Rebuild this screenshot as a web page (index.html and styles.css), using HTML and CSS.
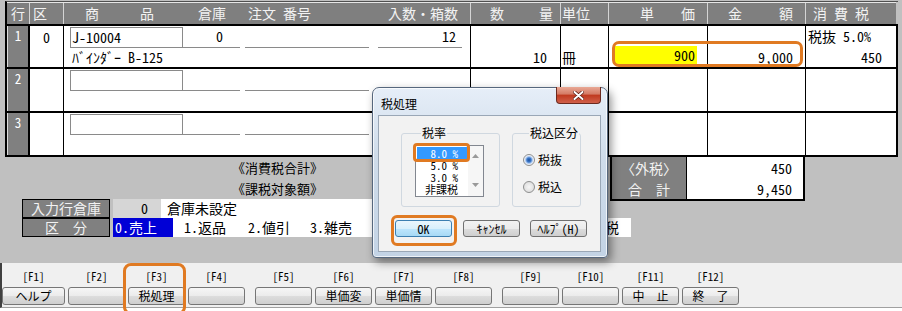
FILE: index.html
```html
<!DOCTYPE html>
<html lang="ja">
<head>
<meta charset="utf-8">
<title>売上入力</title>
<link rel="stylesheet" href="styles.css">
</head>
<body>
<div class="app">
  <div class="main">
    <div class="sheet">
      <div class="hdr">
        <div class="h h-gyo">行</div>
        <div class="h h-ku">区</div>
        <div class="h h-item"><span class="hi-a">商</span><span class="hi-b">品</span><span class="hi-wh">倉庫</span><span class="hi-ord">注文 番号</span><span class="hi-qty">入数・箱数</span></div>
        <div class="h h-split h-num"><span>数</span><span>量</span></div>
        <div class="h h-unit">単位</div>
        <div class="h h-split h-price"><span>単</span><span>価</span></div>
        <div class="h h-split h-amt"><span>金</span><span>額</span></div>
        <div class="h h-tax">消 費 税</div>
      </div>
      <div class="rows">
        <div class="c rn">1</div>
        <div class="c ku">0</div>
        <div class="c item">
          <div class="l1"><div class="code">J-10004</div><div class="wh">0</div><div class="ord"></div><div class="qty">12</div></div>
          <div class="l2 name">ﾊﾞｲﾝﾀﾞｰ B-125</div>
        </div>
        <div class="c num"><div class="l2">10</div></div>
        <div class="c unit"><div class="l2">冊</div></div>
        <div class="c price"><div class="yel">900</div></div>
        <div class="c amt"><div class="l2">9,000</div></div>
        <div class="c tax"><div class="l1t">税抜 5.0%</div><div class="l2">450</div></div>

        <div class="c rn">2</div>
        <div class="c ku"></div>
        <div class="c item">
          <div class="l1"><div class="code"></div><div class="wh"></div><div class="ord"></div><div class="qty"></div></div>
        </div>
        <div class="c num"></div>
        <div class="c unit"></div>
        <div class="c price"></div>
        <div class="c amt"></div>
        <div class="c tax"></div>

        <div class="c rn">3</div>
        <div class="c ku"></div>
        <div class="c item">
          <div class="l1"><div class="code"></div><div class="wh"></div><div class="ord"></div><div class="qty"></div></div>
        </div>
        <div class="c num"></div>
        <div class="c unit"></div>
        <div class="c price"></div>
        <div class="c amt"></div>
        <div class="c tax"></div>
      </div>
    </div>

    <div class="lower">
      <div class="sums">
        <div class="sum-labels"><div>《消費税合計》</div><div>《課税対象額》</div></div>
        <div class="sum-head"><div>〈外税〉</div><div>合　計</div></div>
        <div class="sum-val"><div>450</div><div>9,450</div></div>
      </div>
      <div class="entry">
        <div class="erow">
          <div class="elabel">入力行倉庫</div>
          <div class="ecode">0</div>
          <div class="etext">倉庫未設定</div>
        </div>
        <div class="erow">
          <div class="elabel">区　分</div>
          <div class="esel">0.売上</div>
          <div class="eopts"><span>1.返品</span><span class="o2">2.値引</span><span class="o3">3.雑売</span><span class="tail">税</span></div>
        </div>
      </div>
    </div>
  </div>

  <div class="footer">
    <div class="fgroup">
      <div class="fk wide"><span class="fl">[F1]</span><span class="fb">ヘルプ</span></div>
      <div class="fk"><span class="fl">[F2]</span><span class="fb"></span></div>
      <div class="fk"><span class="fl">[F3]</span><span class="fb">税処理</span></div>
      <div class="fk"><span class="fl">[F4]</span><span class="fb"></span></div>
    </div>
    <div class="fgroup">
      <div class="fk"><span class="fl">[F5]</span><span class="fb"></span></div>
      <div class="fk"><span class="fl">[F6]</span><span class="fb">単価変</span></div>
      <div class="fk"><span class="fl">[F7]</span><span class="fb">単価情</span></div>
      <div class="fk"><span class="fl">[F8]</span><span class="fb"></span></div>
    </div>
    <div class="fgroup">
      <div class="fk"><span class="fl">[F9]</span><span class="fb"></span></div>
      <div class="fk"><span class="fl">[F10]</span><span class="fb"></span></div>
      <div class="fk"><span class="fl">[F11]</span><span class="fb">中　止</span></div>
      <div class="fk"><span class="fl">[F12]</span><span class="fb">終　了</span></div>
    </div>
  </div>

  <div class="dialog">
    <div class="dtitle">
      <span class="dtext">税処理</span>
      <div class="dclose"><svg width="11" height="9" viewBox="0 0 11 9"><path d="M1.5 1 L9.5 8 M9.5 1 L1.5 8" stroke="#5a1a10" stroke-width="3.4" stroke-linecap="round"/><path d="M1.5 1 L9.5 8 M9.5 1 L1.5 8" stroke="#fff" stroke-width="2" stroke-linecap="round"/></svg></div>
    </div>
    <div class="dclient">
      <div class="dgroups">
        <fieldset class="grp grp-rate">
          <legend>税率</legend>
          <div class="list">
            <div class="items">
              <div class="it sel">8.0 %</div>
              <div class="it">5.0 %</div>
              <div class="it">3.0 %</div>
              <div class="it">非課税</div>
            </div>
            <div class="sb">
              <svg width="7" height="4" viewBox="0 0 7 4"><path d="M0 4 L3.5 0 L7 4 Z" fill="#9a9a9a"/></svg>
              <svg width="7" height="4" viewBox="0 0 7 4"><path d="M0 0 L3.5 4 L7 0 Z" fill="#9a9a9a"/></svg>
            </div>
          </div>
        </fieldset>
        <fieldset class="grp grp-mode">
          <legend>税込区分</legend>
          <div class="radio"><span class="rb on"></span>税抜</div>
          <div class="radio r2"><span class="rb"></span>税込</div>
        </fieldset>
      </div>
      <div class="dbtns">
        <div class="btn ok">OK</div>
        <div class="btn b2">ｷｬﾝｾﾙ</div>
        <div class="btn b3">ﾍﾙﾌﾟ(H)</div>
      </div>
    </div>
  </div>

  <div class="mark m-price"></div>
  <div class="mark m-rate"></div>
  <div class="mark m-ok"></div>
  <div class="mark m-f3"></div>
</div>
</body>
</html>
```
FILE: styles.css
```css
* { box-sizing: border-box; margin: 0; padding: 0; }
html, body { width: 902px; height: 311px; overflow: hidden; background: #fff; }
body {
  font-family: "Noto Sans Mono CJK JP", "Noto Sans CJK JP", sans-serif;
  font-size: 14px;
  color: #000;
  line-height: 1;
}
.app { position: relative; width: 902px; height: 311px; }

/* main gray area */
.main { height: 263px; background: #c0c0c0; padding: 1px 0 0 5px; }
.sheet { width: 893px; border-top: 1px solid #505050; border-left: 2px solid #000; }

.hdr {
  display: grid;
  grid-template-columns: 22px 33px 406px 89px 47px 98px 97px 90px;
  column-gap: 1px;
  width: 889px;
  height: 22px;
  border-top: 1px solid #e6e6e6;
  background: #d4d4d4;
}
.h {
  display: flex;
  background: #7f7f7f;
  color: #f2f2f2;
  line-height: 21px;
  white-space: nowrap;
}
.h-gyo { justify-content: center; }
.h-ku { padding-left: 3px; }
.h-item { padding-left: 21px; }
.hi-b { margin-left: 41px; }
.hi-wh { margin-left: 44px; }
.hi-ord { margin-left: 22px; }
.hi-qty { margin-left: auto; padding-right: 12px; }
.h-split { justify-content: space-between; }
.h-num { padding: 0 7px 0 19px; }
.h-price { padding: 0 12px 0 31px; }
.h-amt { padding: 0 12px 0 20px; }
.h-unit { padding-left: 1px; }
.h-tax { padding-left: 7px; }

.rows {
  display: grid;
  grid-template-columns: 22px 33px 406px 89px 47px 98px 97px 90px;
  grid-template-rows: 41px 42px 42px;
  gap: 2px 1px;
  width: 891px;
  background: #000;
  border-top: 2px solid #000;
  border-bottom: 2px solid #000;
  border-right: 2px solid #000;
}
.c { display: flex; flex-direction: column; min-width: 0; background: #fff; white-space: nowrap; }
.rn {
  background: #808080;
  border-left: 1px solid #dcdcdc;
  border-right: 1px solid #000;
  color: #fff;
  font-size: 13px;
  align-items: center;
  padding-top: 3px;
}
.ku { align-items: center; padding-top: 4px; }

.item .l1 { display: flex; height: 22px; padding: 1px 0 0 6px; }
.code { width: 113px; height: 21px; border: 1px solid #8a8a8a; padding-left: 1px; line-height: 19px; }
.wh { width: 57px; height: 21px; border-bottom: 1px solid #8a8a8a; text-align: right; padding-right: 17px; line-height: 19px; }
.ord { width: 124px; height: 21px; margin-left: 5px; border-bottom: 1px solid #8a8a8a; }
.qty { width: 84px; height: 21px; margin-left: 9px; border-bottom: 1px solid #8a8a8a; text-align: right; padding-right: 6px; line-height: 19px; }

.l2 { height: 19px; line-height: 19px; margin-top: auto; }
.item .name { padding-left: 8px; }
.num .l2 { text-align: right; padding-right: 13px; }
.unit .l2 { padding-left: 1px; }
.price { padding: 20px 0 0 4px; }
.yel { width: 84px; height: 18px; background: #ffff00; text-align: right; padding-right: 2px; line-height: 18px; }
.amt .l2 { text-align: right; padding-right: 12px; }
.tax .l1t { height: 22px; line-height: 19px; padding: 1px 0 0 2px; }
.tax .l2 { text-align: right; padding-right: 14px; }

/* lower area */
.lower { height: 104px; }
.sums {
  display: grid;
  grid-template-columns: 605px 76px 119px;
  grid-template-rows: 42px;
}
.sum-labels { padding-left: 227px; font-size: 13px; line-height: 21px; }
.sum-head {
  height: 44px;
  background: #808080;
  color: #f2f2f2;
  border-left: 2px solid #000;
  border-bottom: 2px solid #000;
  text-align: center;
  line-height: 21px;
  padding-top: 1px;
}
.sum-val {
  height: 44px;
  background: #fff;
  border-left: 1px solid #000;
  border-right: 2px solid #000;
  border-bottom: 2px solid #000;
  text-align: right;
  padding: 1px 11px 0 0;
  line-height: 21px;
}
.entry { padding-left: 17px; }
.erow { display: flex; height: 19px; line-height: 19px; white-space: nowrap; }
.elabel {
  width: 88px;
  background: #808080;
  color: #f2f2f2;
  border: 1px solid #000;
  text-align: center;
  line-height: 17px;
}
.ecode { width: 48px; margin-left: 3px; background: #d6d6d6; text-align: right; padding-right: 13px; }
.etext { width: 240px; background: #fff; padding-left: 6px; }
.esel { width: 60px; margin-left: 3px; background: #0000d6; color: #fff; padding-left: 2px; }
.eopts { display: flex; width: 458px; background: #fff; padding-left: 11px; }
.o2 { margin-left: 22px; }
.o3 { margin-left: 20px; }
.tail { margin-left: auto; padding-right: 12px; }

/* function keys */
.footer {
  display: flex;
  gap: 10px;
  height: 45px;
  background: #f0f0f0;
  border-bottom: 1px solid #a0a0a0;
  border-left: 2px solid #404040;
  padding-top: 4px;
}
.fgroup { display: flex; gap: 3px; }
.fk { display: flex; flex-direction: column; align-items: center; width: 57px; }
.fk.wide { width: 63px; }
.fl { height: 19px; line-height: 19px; font-size: 11px; }
.fb {
  width: 100%;
  height: 18px;
  margin-top: 1px;
  border: 1px solid #767676;
  border-radius: 3px;
  background: linear-gradient(#f6f6f6, #ebebeb 50%, #dddddd 50%, #cfcfcf);
  font-size: 12px;
  line-height: 16px;
  text-align: center;
}

/* dialog */
.dialog {
  position: absolute;
  left: 372px;
  top: 87px;
  width: 236px;
  height: 171px;
  display: flex;
  flex-direction: column;
  padding: 0 6px 5px 5px;
  border: 1px solid #56677d;
  border-radius: 7px 7px 4px 4px;
  background: linear-gradient(#e6eef8, #cfdcea 40%, #c3d3e5);
  box-shadow: 3px 4px 10px rgba(0, 0, 0, 0.45), inset 0 0 0 1px rgba(255, 255, 255, 0.7);
}
.dtitle { display: flex; justify-content: space-between; height: 27px; }
.dtext { padding: 7px 0 0 3px; font-size: 12px; line-height: 18px; }
.dclose {
  display: flex;
  align-items: center;
  justify-content: center;
  width: 45px;
  height: 17px;
  margin: -1px 0 0 0;
  border: 1px solid #6b2a1f;
  border-top: 0;
  border-radius: 0 0 4px 4px;
  background: linear-gradient(#e9a895, #d47a64 45%, #c0391e 50%, #d0604a);
}
.dclient {
  flex: 1;
  background: #f2f2f2;
  border: 1px solid #9aa7b6;
  padding: 11px 0 0 16px;
}
.dgroups { display: flex; gap: 12px; margin-left: 6px; }
.grp { height: 80px; border: 1px solid #d0d8e0; border-radius: 3px; }
.grp legend { margin-left: 6px; padding: 0 1px; font-size: 12px; line-height: 12px; }
.grp-rate { width: 99px; padding: 6px 0 0 13px; }
.list { display: flex; width: 69px; height: 52px; border: 1px solid #828790; background: #fff; }
.items { flex: 1; padding: 1px 0 0 1px; }
.it { width: 50px; height: 12px; line-height: 12px; font-size: 11px; text-align: right; padding-right: 9px; white-space: nowrap; }
.it.sel { background: #3399ff; color: #fff; }
.sb {
  display: flex;
  flex-direction: column;
  justify-content: space-between;
  align-items: center;
  width: 15px;
  padding: 8px 0 9px;
  background: #f6f6f6;
}
.grp-mode { width: 69px; padding: 14px 0 0 10px; }
.radio { display: flex; align-items: center; gap: 3px; height: 14px; font-size: 12px; }
.radio.r2 { margin-top: 13px; }
.rb {
  width: 12px;
  height: 12px;
  border-radius: 50%;
  border: 1px solid #8e8f8f;
  background: radial-gradient(circle, #f6f6f6, #d6d6d6);
}
.rb.on { background: radial-gradient(circle, #1c4f9c 0, #3f7ccc 2.2px, #a9c6ee 3.4px, #eef2f8 4.6px); }
.dbtns { display: flex; margin-top: 13px; }
.btn {
  width: 57px;
  height: 17px;
  border: 1px solid #707070;
  border-radius: 3px;
  background: linear-gradient(#f2f2f2, #ebebeb 50%, #dddddd 50%, #cfcfcf);
  font-size: 12px;
  line-height: 15px;
  text-align: center;
  white-space: nowrap;
}
.btn.ok { border-color: #3c7fb1; background: linear-gradient(#eaf6fd, #d9f0fc 50%, #bee6fd 50%, #a7d9f5); }
.btn.b2 { margin-left: 11px; }
.btn.b3 { margin-left: 10px; }

/* orange annotation marks */
.mark { position: absolute; border: 3px solid #e07a22; border-radius: 7px; }
.m-price { left: 612px; top: 41px; width: 191px; height: 26px; }
.m-rate { left: 413px; top: 143px; width: 57px; height: 19px; border-radius: 4px; }
.m-ok { left: 391px; top: 215px; width: 66px; height: 31px; border-radius: 6px; }
.m-f3 { left: 123px; top: 263px; width: 63px; height: 52px; border-radius: 8px; }
```
